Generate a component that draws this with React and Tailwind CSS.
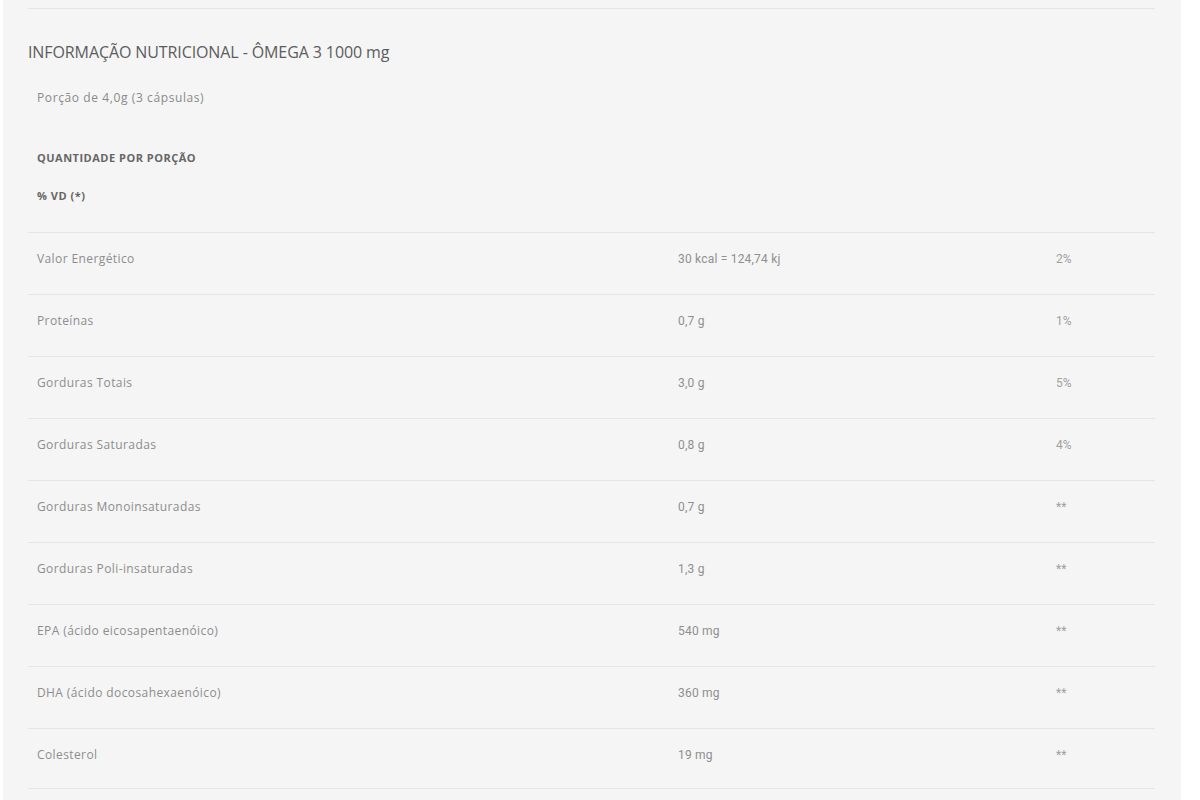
const rows = [
  ["Valor Energético", "30 kcal = 124,74 kj", "2%"],
  ["Proteínas", "0,7 g", "1%"],
  ["Gorduras Totais", "3,0 g", "5%"],
  ["Gorduras Saturadas", "0,8 g", "4%"],
  ["Gorduras Monoinsaturadas", "0,7 g", "**"],
  ["Gorduras Poli-insaturadas", "1,3 g", "**"],
  ["EPA (ácido eicosapentaenóico)", "540 mg", "**"],
  ["DHA (ácido docosahexaenóico)", "360 mg", "**"],
  ["Colesterol", "19 mg", "**"],
];

export default function App() {
  return (
    <div className="min-h-screen bg-white font-['Open_Sans',sans-serif]">
      <div className="ml-[3px] w-[1178px] min-h-screen bg-[#f5f5f5] pt-2 pl-[25px] pr-[26px]">
        <div className="border-t border-[#e6e6e6]" />
        <h2 className="mt-[31px] text-[16px] leading-6 font-medium tracking-[-0.1px] text-[#5c5c5c]">
          INFORMAÇÃO NUTRICIONAL - ÔMEGA 3 1000 mg
        </h2>
        <div className="pl-[9px]">
          <p className="mt-[25px] text-[12px] leading-[18px] tracking-[0.6px] text-[#8a8a8a]">
            Porção de 4,0g (3 cápsulas)
          </p>
          <p className="mt-[43px] text-[11px] leading-4 font-bold tracking-[0.5px] text-[#666]">
            QUANTIDADE POR PORÇÃO
          </p>
          <p className="mt-[22px] text-[11px] leading-4 font-bold tracking-[0.5px] text-[#666]">
            % VD (*)
          </p>
        </div>
        <div className="mt-[28px]">
          {rows.map(([label, value, vd]) => (
            <div
              key={label}
              className="grid grid-cols-[641px_378px_1fr] h-[62px] border-t border-[#e6e6e6] last:h-[61px] last:border-b pt-[17px] pl-[9px] text-[12px] leading-[18px] text-[#8d8d8d]"
            >
              <span className="tracking-[0.4px]">{label}</span>
              <span className="font-['Roboto',sans-serif] tracking-[0.2px] text-[#8f8f8f]">{value}</span>
              <span className="font-['Roboto',sans-serif] text-[#a0a0a0]">{vd}</span>
            </div>
          ))}
        </div>
      </div>
    </div>
  );
}
